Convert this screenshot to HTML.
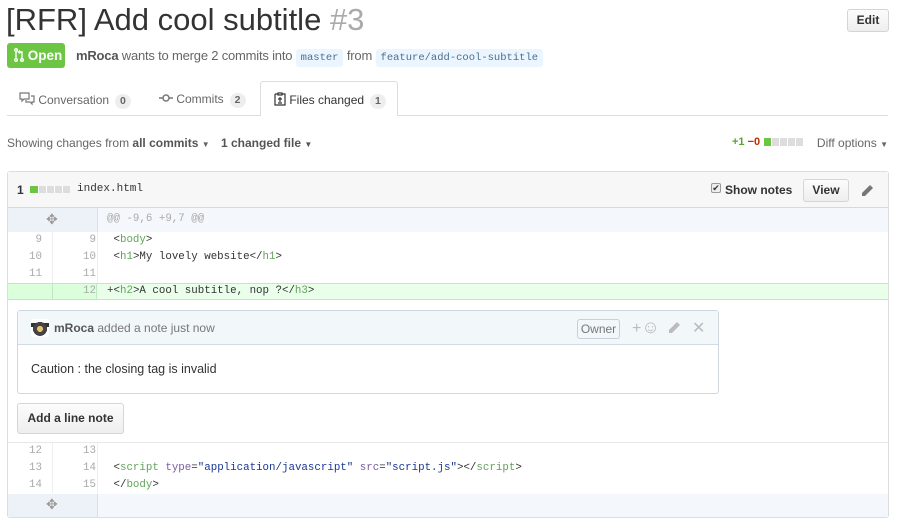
<!DOCTYPE html>
<html><head><meta charset="utf-8"><style>
*{box-sizing:border-box;margin:0;padding:0}
body{width:903px;height:526px;background:#fff;font-family:"Liberation Sans",sans-serif;color:#333;position:relative;overflow:hidden;font-size:13px}
.a{position:absolute;white-space:nowrap}
.mono{font-family:"Liberation Mono",monospace;font-size:11px}
.cnt{display:inline-block;background:#eee;border-radius:9px;padding:1px 5px;font-size:10.5px;font-weight:bold;color:#666;margin-left:6px;line-height:13px}
.br{background:#eaf5ff;color:#4c6f8a;border-radius:3px;padding:3px 5px;font-size:10.5px;font-family:"Liberation Mono",monospace}
.row{position:absolute;left:8px;width:880px;height:17px}
.n{position:absolute;top:0;height:17px;line-height:17px;font-family:"Liberation Mono",monospace;font-size:10.8px;color:#aaa;text-align:right}
.c{position:absolute;left:99px;top:0;line-height:17px;font-family:"Liberation Mono",monospace;font-size:10.8px;color:#333}
.g{color:#63a35c}.b{color:#183691}.p{color:#795da3}
.btn{position:absolute;border:1px solid #d5d5d5;border-radius:3px;background:linear-gradient(#fcfcfc,#eee);font-weight:bold;font-size:12px;text-align:center;color:#333}
</style></head><body>
<div class="a" style="left:6px;top:2px;font-size:31px;color:#333;line-height:36px">[RFR] Add cool subtitle <span style="color:#aaa">#3</span></div>
<div class="btn" style="left:847px;top:9px;width:42px;height:23px;line-height:21px;font-size:12px">Edit</div>
<div class="a" style="left:7px;top:43px;width:58px;height:25px;background:#6cc644;border-radius:3px;color:#fff;font-weight:bold;font-size:13.5px;line-height:25px;padding-left:7px">
<svg width="10" height="14" viewBox="0 0 10 14" style="vertical-align:-2px"><g fill="none" stroke="#fff" stroke-width="1.4"><circle cx="2" cy="2" r="1.3"/><circle cx="2" cy="12" r="1.3"/><circle cx="8" cy="12" r="1.3"/><path d="M2 3.5V10.5M8 10.5V4H5M6 2.5L4.5 4 6 5.5"/></g></svg> Open</div>
<div class="a" style="left:76px;top:47px;font-size:13px;color:#666;line-height:18px;letter-spacing:-0.2px"><b style="color:#555">mRoca</b> wants to merge 2 commits into <span class="br" style="letter-spacing:0">master</span> from <span class="br" style="letter-spacing:0">feature/add-cool-subtitle</span></div>
<div class="a" style="left:7px;top:115px;width:881px;border-top:1px solid #ddd"></div>
<div class="a" style="left:260px;top:81px;width:138px;height:35px;border:1px solid #ddd;border-bottom:none;background:#fff;border-radius:3px 3px 0 0"></div>
<div class="a" style="left:19px;top:92px;color:#666;font-size:12px;line-height:15px"><svg width="16" height="14" viewBox="0 0 16 14" style="vertical-align:-2px"><g fill="none" stroke="#777" stroke-width="1.2"><path d="M1 1h9v6H5l-2 2V7H1z"/><path d="M12 4h3v6h-2v2l-2-2H7V8"/></g></svg> Conversation<span class="cnt">0</span></div>
<div class="a" style="left:159px;top:92px;color:#666;font-size:12px;line-height:15px"><svg width="14" height="10" viewBox="0 0 14 10"><g fill="none" stroke="#777" stroke-width="1.5"><circle cx="7" cy="5" r="3"/><path d="M0 5h4M10 5h4"/></g></svg> Commits<span class="cnt">2</span></div>
<div class="a" style="left:274px;top:92px;color:#333;font-size:12px;line-height:15px"><svg width="12" height="14" viewBox="0 0 12 14" style="vertical-align:-2px"><g fill="none" stroke="#333" stroke-width="1.2"><path d="M1 2h3M8 2h3v11H1V2"/><path d="M6 5v5M4 7h4M4 11h4"/><rect x="4" y="1" width="4" height="2"/></g></svg> Files changed<span class="cnt">1</span></div>
<div class="a" style="left:7px;top:136px;color:#666;font-size:12px">Showing changes from <b style="color:#555">all commits</b> <span style="font-size:8px">▼</span></div>
<div class="a" style="left:221px;top:136px;color:#555;font-size:12px"><b>1 changed file</b> <span style="font-size:8px">▼</span></div>
<div class="a" style="left:732px;top:136px;font-size:11px;font-weight:bold"><span style="color:#55a532">+1</span> <span style="color:#bd2c00">−0</span></div>
<div class="a" style="left:764px;top:138px;width:40px;height:8px;background:linear-gradient(90deg,#6cc644 0 7px,#fff 7px 8px,#ddd 8px 15px,#fff 15px 16px,#ddd 16px 23px,#fff 23px 24px,#ddd 24px 31px,#fff 31px 32px,#ddd 32px 39px,#fff 39px)"></div>
<div class="a" style="right:15px;top:136px;color:#666;font-size:12px">Diff options <span style="font-size:8px">▼</span></div>
<!-- file box -->
<div class="a" style="left:7px;top:171px;width:882px;height:347px;border:1px solid #ddd;border-radius:3px"></div>
<div class="a" style="left:8px;top:172px;width:880px;height:36px;background:#f7f7f7;border-bottom:1px solid #d8d8d8"></div>
<div class="a" style="left:17px;top:183px;font-size:12px;font-weight:bold">1</div>
<div class="a" style="left:30px;top:186px;width:40px;height:7px;background:linear-gradient(90deg,#6cc644 0 8px,#fff 8px 9px,#ddd 9px 16px,#fff 16px 17px,#ddd 17px 24px,#fff 24px 25px,#ddd 25px 32px,#fff 32px 33px,#ddd 33px 40px)"></div>
<div class="a mono" style="left:77px;top:183px;color:#333;font-size:11px">index.html</div>
<div class="a" style="left:711px;top:183px;width:10px;height:10px;border:1px solid #999;border-radius:2px;background:#eee;font-size:9px;line-height:8px;text-align:center">✔</div>
<div class="a" style="left:725px;top:183px;font-weight:bold;font-size:12px">Show notes</div>
<div class="btn" style="left:803px;top:179px;width:46px;height:23px;line-height:21px">View</div>
<svg class="a" style="left:860px;top:184px" width="14" height="14" viewBox="0 0 14 14"><path d="M10 1l3 3-8 8H2V9z" fill="#777"/></svg>
<!-- hunk -->
<div class="a" style="left:8px;top:208px;width:880px;height:24px;background:#f4f7fb"></div>
<div class="a" style="left:8px;top:208px;width:90px;height:24px;background:#edf2f9;border-right:1px solid #d8dfe8"></div>
<div class="a" style="left:46px;top:211px;color:#999;font-size:14px">✥</div>
<div class="a mono" style="left:107px;top:213px;color:#aaa;font-size:10.8px">@@ -9,6 +9,7 @@</div>
<div class="a" style="left:52px;top:232px;height:68px;border-left:1px solid #eee"></div>
<div class="a" style="left:97px;top:232px;height:68px;border-left:1px solid #eee"></div>
<div class="row" style="top:232px"><span class="n" style="left:0;width:34px">9</span><span class="n" style="left:44px;width:44px">9</span><span class="c">&nbsp;&lt;<span class="g">body</span>&gt;</span></div>
<div class="row" style="top:249px"><span class="n" style="left:0;width:34px">10</span><span class="n" style="left:44px;width:44px">10</span><span class="c">&nbsp;&lt;<span class="g">h1</span>&gt;My lovely website&lt;/<span class="g">h1</span>&gt;</span></div>
<div class="row" style="top:266px"><span class="n" style="left:0;width:34px">11</span><span class="n" style="left:44px;width:44px">11</span></div>
<div class="row" style="top:283px;background:#eaffea;border-top:1px solid #c1e9c1;border-bottom:1px solid #c1e9c1"><span class="a" style="left:0;top:0;width:89px;height:15px;background:#dbffdb;border-right:1px solid #c1e9c1"></span><span class="a" style="left:44px;top:0;height:15px;border-left:1px solid #c1e9c1"></span><span class="n" style="left:44px;width:44px;top:-1px">12</span><span class="c" style="top:-1px">+&lt;<span class="g">h2</span>&gt;A cool subtitle, nop ?&lt;/<span class="g">h3</span>&gt;</span></div>
<!-- note -->
<div class="a" style="left:17px;top:310px;width:702px;height:84px;border:1px solid #cfd8de;border-radius:3px;background:#fff"></div>
<div class="a" style="left:18px;top:311px;width:700px;height:34px;background:#f2f7fa;border-bottom:1px solid #d1dbe1"></div>
<div class="a" style="left:31px;top:319px;width:18px;height:18px;background:radial-gradient(circle at 50% 55%,#e8c070 0 3px,#444 3px 7px,transparent 7px),linear-gradient(#fff 0 4px,#333 4px 8px,#fff 8px);border-radius:2px"></div>
<div class="a" style="left:54px;top:321px;color:#777;font-size:12px"><b style="color:#555">mRoca</b> added a note just now</div>
<div class="a" style="left:577px;top:319px;width:43px;height:20px;border:1px solid #c5d0d8;border-radius:3px;color:#777;font-size:12px;line-height:18px;text-align:center">Owner</div>
<div class="a" style="left:632px;top:317px;color:#bbb;font-size:16px">+<span style="font-size:18px">☺</span></div>
<svg class="a" style="left:667px;top:321px" width="14" height="14" viewBox="0 0 14 14"><path d="M10 1l3 3-8 8H2V9z" fill="#bbb"/></svg>
<div class="a" style="left:692px;top:318px;color:#bbb;font-size:16px">✕</div>
<div class="a" style="left:31px;top:362px;font-size:12.5px;color:#333">Caution : the closing tag is invalid</div>
<div class="btn" style="left:17px;top:403px;width:107px;height:31px;line-height:29px;font-size:12px">Add a line note</div>
<div class="a" style="left:8px;top:442px;width:880px;border-top:1px solid #e8e8e8"></div>
<div class="a" style="left:52px;top:443px;height:50px;border-left:1px solid #eee"></div>
<div class="a" style="left:97px;top:443px;height:50px;border-left:1px solid #eee"></div>
<div class="row" style="top:443px"><span class="n" style="left:0;width:34px">12</span><span class="n" style="left:44px;width:44px">13</span></div>
<div class="row" style="top:460px"><span class="n" style="left:0;width:34px">13</span><span class="n" style="left:44px;width:44px">14</span><span class="c">&nbsp;&lt;<span class="g">script</span> <span class="p">type</span>=<span class="b">"application/javascript"</span> <span class="p">src</span>=<span class="b">"script.js"</span>&gt;&lt;/<span class="g">script</span>&gt;</span></div>
<div class="row" style="top:477px"><span class="n" style="left:0;width:34px">14</span><span class="n" style="left:44px;width:44px">15</span><span class="c">&nbsp;&lt;/<span class="g">body</span>&gt;</span></div>
<div class="a" style="left:8px;top:494px;width:880px;height:23px;background:#f4f7fb"></div>
<div class="a" style="left:8px;top:494px;width:90px;height:23px;background:#edf2f9;border-right:1px solid #d8dfe8"></div>
<div class="a" style="left:46px;top:496px;color:#999;font-size:14px">✥</div>
</body></html>
